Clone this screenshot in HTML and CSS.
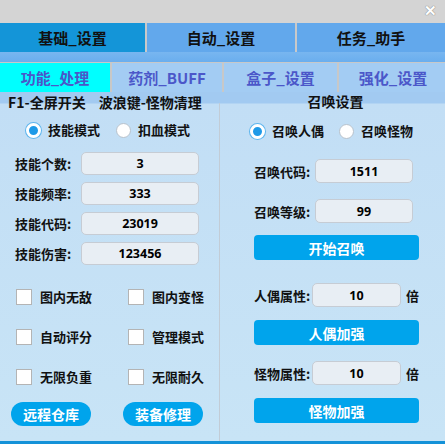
FILE: index.html
```html
<!DOCTYPE html>
<html lang="zh-CN">
  <head>
    <meta charset="UTF-8" />
    <meta name="viewport" content="width=device-width, initial-scale=1.0" />
    <title>基础设置</title>
    <link rel="stylesheet" href="styles.css">
  </head>
  <body>
    <div class="window">
      <!-- 标题栏 -->
      <div class="titlebar">
        <span class="close">✕</span>
      </div>

      <!-- 主选项卡 -->
      <div class="tabs-main">
        <div class="tab active">基础_设置</div>
        <div class="tab">自动_设置</div>
        <div class="tab">任务_助手</div>
      </div>
      <div class="strip"></div>

      <!-- 子选项卡 -->
      <div class="tabs-sub">
        <div class="sub active">功能_处理</div>
        <div class="sub">药剂_BUFF</div>
        <div class="sub">盒子_设置</div>
        <div class="sub">强化_设置</div>
      </div>

      <div class="content">
        <!-- 左侧：技能设置 -->
        <div class="panel left">
          <div class="head">F1-全屏开关<span class="spacer"></span>波浪键-怪物清理</div>

          <div class="radios">
            <label class="radio"><span class="dot checked"></span>技能模式</label>
            <label class="radio"><span class="dot"></span>扣血模式</label>
          </div>

          <div class="fields">
            <div class="field"><span class="lbl">技能个数:</span><span class="input">3</span></div>
            <div class="field"><span class="lbl">技能频率:</span><span class="input">333</span></div>
            <div class="field"><span class="lbl">技能代码:</span><span class="input">23019</span></div>
            <div class="field"><span class="lbl">技能伤害:</span><span class="input">123456</span></div>
          </div>

          <div class="checks">
            <label class="check"><span class="box"></span>图内无敌</label>
            <label class="check"><span class="box"></span>图内变怪</label>
            <label class="check"><span class="box"></span>自动评分</label>
            <label class="check"><span class="box"></span>管理模式</label>
            <label class="check"><span class="box"></span>无限负重</label>
            <label class="check"><span class="box"></span>无限耐久</label>
          </div>

          <div class="pills">
            <button class="pill">远程仓库</button>
            <button class="pill">装备修理</button>
          </div>
        </div>

        <!-- 右侧：召唤设置 -->
        <div class="panel right">
          <div class="head center">召唤设置</div>

          <div class="radios">
            <label class="radio"><span class="dot checked"></span>召唤人偶</label>
            <label class="radio"><span class="dot"></span>召唤怪物</label>
          </div>

          <div class="field wide first"><span class="lbl">召唤代码:</span><span class="input">1511</span></div>
          <div class="field wide"><span class="lbl">召唤等级:</span><span class="input">99</span></div>
          <button class="btn">开始召唤</button>

          <div class="field wide mult"><span class="lbl">人偶属性:</span><span class="input">10</span><span class="unit">倍</span></div>
          <button class="btn">人偶加强</button>

          <div class="field wide mult second"><span class="lbl">怪物属性:</span><span class="input">10</span><span class="unit">倍</span></div>
          <button class="btn">怪物加强</button>
        </div>
      </div>
      <div class="bottom"></div>
    </div>
  </body>
</html>
```

FILE: styles.css
```css
/* 整体窗口 */
body {
  margin: 0;
  font-family: "Noto Sans CJK SC", "Noto Sans", sans-serif;
  font-size: 13px;
  font-weight: 700;
  color: #111;
}

.window {
  width: 445px;
  height: 444px;
  display: flex;
  flex-direction: column;
  background: #c6e2f6;
  overflow: hidden;
}

/* 标题栏 */
.titlebar {
  height: 23px;
  background: #d4d4d4;
  display: flex;
  justify-content: flex-end;
  align-items: flex-start;
}

.close {
  color: #fff;
  font-size: 15px;
  line-height: 15px;
  margin: 2px 8px 0 0;
  text-shadow: 0 0 1px #888, 0 0 1px #888;
}

/* 主选项卡 */
.tabs-main {
  height: 29px;
  display: grid;
  grid-template-columns: 145px 148px 148px;
  column-gap: 2px;
  background: #c9c9c9;
}

.tab {
  display: flex;
  align-items: center;
  justify-content: center;
  font-size: 15px;
  background: #62a8ec;
}

.tab.active {
  background: #1495d8;
}

.strip {
  height: 10px;
  background: linear-gradient(#78b6f0, #6aaeee);
  border-bottom: 1px solid #c8c8c8;
}

/* 子选项卡 */
.tabs-sub {
  height: 29px;
  display: grid;
  grid-template-columns: 110px 110px 113px 108px;
  column-gap: 2px;
  background: #c8c8c8;
}

.sub {
  display: flex;
  align-items: center;
  justify-content: center;
  font-size: 15px;
  color: #4b57c9;
  background: #a3ccf3;
}

.sub.active {
  background: #00ffff;
}

/* 内容区 */
.content {
  flex: 1;
  display: grid;
  grid-template-columns: 219px 1fr;
  background: linear-gradient(#a2caf1 0, #a2caf1 11px, #c2def5 12px, #c8e4f6 100%);
}

.panel {
  display: flex;
  flex-direction: column;
}

.panel.right {
  border-left: 1px solid #c2ccd6;
  margin-top: 11px;
  padding-left: 34px;
  padding-right: 32px;
}

.head {
  padding: 1px 0 0 8px;
  line-height: 18px;
  font-size: 14px;
  white-space: nowrap;
}

.spacer {
  display: inline-block;
  width: 13px;
}

.right .head {
  margin-top: -12px;
  padding-left: 0;
  text-align: center;
  margin-left: -34px;
  margin-right: -32px;
}

/* 单选 */
.radios {
  display: flex;
  gap: 16px;
  padding-left: 26px;
  margin-top: 10px;
  white-space: nowrap;
}

.right .radios {
  padding-left: 0;
  margin-left: -4px;
  gap: 15px;
  margin-top: 12px;
}

.radio {
  display: flex;
  align-items: center;
  gap: 7px;
  line-height: 18px;
}

.dot {
  width: 13px;
  height: 13px;
  border-radius: 50%;
  background: #fff;
  border: 1px solid #b8c2cc;
  box-sizing: content-box;
  flex: none;
}

.dot.checked {
  width: 9px;
  height: 9px;
  background: #1e9ae8;
  border: 3px solid #fff;
  box-shadow: 0 0 0 1px #5fb6ee;
}

/* 输入行 */
.fields {
  display: flex;
  flex-direction: column;
  gap: 7px;
  margin-top: 13px;
  padding-left: 15px;
}

.field {
  display: flex;
  align-items: center;
  white-space: nowrap;
}

.lbl {
  width: 66px;
  flex: none;
}

.input {
  width: 118px;
  height: 23px;
  box-sizing: border-box;
  border: 1px solid #c6ccd4;
  border-radius: 5px;
  background: #e8eef4;
  display: flex;
  align-items: center;
  justify-content: center;
  font-family: "Open Sans", "Noto Sans", sans-serif;
  font-size: 12.5px;
  color: #000;
  flex: none;
}

.field.wide .lbl {
  width: 61px;
}

.field.wide .input {
  width: 98px;
  height: 24px;
}

.field.first {
  margin-top: 19px;
}

.field.wide + .field.wide {
  margin-top: 16px;
}

.field.mult {
  margin-top: 23px;
}

.field.mult.second {
  margin-top: 16px;
}

.field.mult .lbl {
  width: 58px;
}

.field.mult .input {
  width: 89px;
}

.unit {
  margin-left: 5px;
}

/* 右侧按钮 */
.btn {
  margin-top: 12px;
  height: 25px;
  border: none;
  border-radius: 4px;
  background: #00a4ec;
  color: #fff;
  font-family: inherit;
  font-size: 14px;
  font-weight: 700;
  padding: 0;
}

.field.mult + .btn {
  margin-top: 13px;
}

/* 复选框 */
.checks {
  display: grid;
  grid-template-columns: 112px 1fr;
  row-gap: 22px;
  margin-top: 23px;
  padding-left: 16px;
}

.check {
  display: flex;
  align-items: center;
  gap: 8px;
  line-height: 18px;
}

.box {
  width: 14px;
  height: 14px;
  background: #fff;
  border: 1px solid #b4b4b4;
}

/* 左侧圆角按钮 */
.pills {
  display: flex;
  gap: 32px;
  padding-left: 11px;
  margin-top: 16px;
}

.pill {
  width: 80px;
  height: 24px;
  border: none;
  border-radius: 12px;
  background: #00a4ec;
  color: #fff;
  font-family: inherit;
  font-size: 14px;
  font-weight: 700;
  padding: 0;
}

.bottom {
  height: 3px;
  background: #1492d8;
}
```
